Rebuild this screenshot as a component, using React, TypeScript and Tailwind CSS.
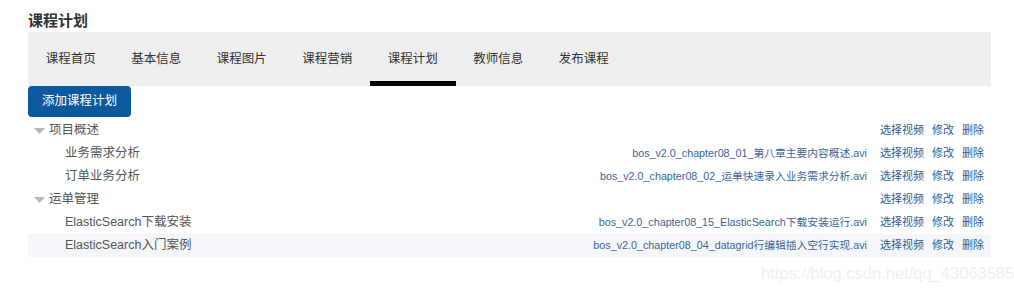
import React from "react";

const tabs = ["课程首页", "基本信息", "课程图片", "课程营销", "课程计划", "教师信息", "发布课程"];

type Row = { label: string; level: 0 | 1; file?: string; hl?: boolean };

const rows: Row[] = [
  { label: "项目概述", level: 0 },
  { label: "业务需求分析", level: 1, file: "bos_v2.0_chapter08_01_第八章主要内容概述.avi" },
  { label: "订单业务分析", level: 1, file: "bos_v2.0_chapter08_02_运单快速录入业务需求分析.avi" },
  { label: "运单管理", level: 0 },
  { label: "ElasticSearch下载安装", level: 1, file: "bos_v2.0_chapter08_15_ElasticSearch下载安装运行.avi" },
  { label: "ElasticSearch入门案例", level: 1, file: "bos_v2.0_chapter08_04_datagrid行编辑插入空行实现.avi", hl: true },
];

export default function App() {
  return (
    <div
      className="relative w-[1014px] h-[289px] bg-white overflow-hidden"
      style={{ fontFamily: '"Liberation Sans", Arial, "Noto Sans CJK SC", sans-serif' }}
    >
      <div className="pl-[28px] pt-[10px] w-[991px]">
        <div className="h-[22px] leading-[22px] text-[15px] font-bold text-[#333]">课程计划</div>
        <div className="flex h-[54px] bg-[#eeeeee]">
          {tabs.map((t, i) => (
            <div
              key={t}
              className={
                "w-[85.5px] h-full flex items-center justify-center pt-[6px] border-b-[5px] text-[12.5px] text-[#333] " +
                (i === 4 ? "border-black" : "border-transparent")
              }
            >
              {t}
            </div>
          ))}
        </div>
        <button className="w-[103px] h-[31px] rounded-[4px] bg-[#0c5a9d] text-white text-[12.5px] flex items-center justify-center">
          添加课程计划
        </button>
        <div className="mt-[2px]">
          {rows.map((r, i) => (
            <div
              key={i}
              className={"flex items-center h-[23px] pr-[7px] " + (r.hl ? "bg-[#f5f6f9]" : "")}
            >
              <div className="flex-1 flex items-center text-[12.5px] text-[#555]">
                {r.level === 0 ? (
                  <>
                    <svg width="11" height="6" viewBox="0 0 11 6" className="ml-[6px] mr-[4px]">
                      <path d="M0 0 L11 0 L5.5 6 Z" fill="#b9b9b9" />
                    </svg>
                    <span>{r.label}</span>
                  </>
                ) : (
                  <span className="ml-[37px]">{r.label}</span>
                )}
              </div>
              {r.file && <span className="text-[10.75px] text-[#3b6797] mr-[13px]">{r.file}</span>}
              <div className="flex gap-[8px] text-[11px] text-[#2f5e92]">
                <span>选择视频</span>
                <span>修改</span>
                <span>删除</span>
              </div>
            </div>
          ))}
        </div>
      </div>
      <div className="absolute left-[761px] top-[261px] text-[16.5px] text-[#efefef] whitespace-nowrap">
        https://blog.csdn.net/qq_43063585
      </div>
    </div>
  );
}
